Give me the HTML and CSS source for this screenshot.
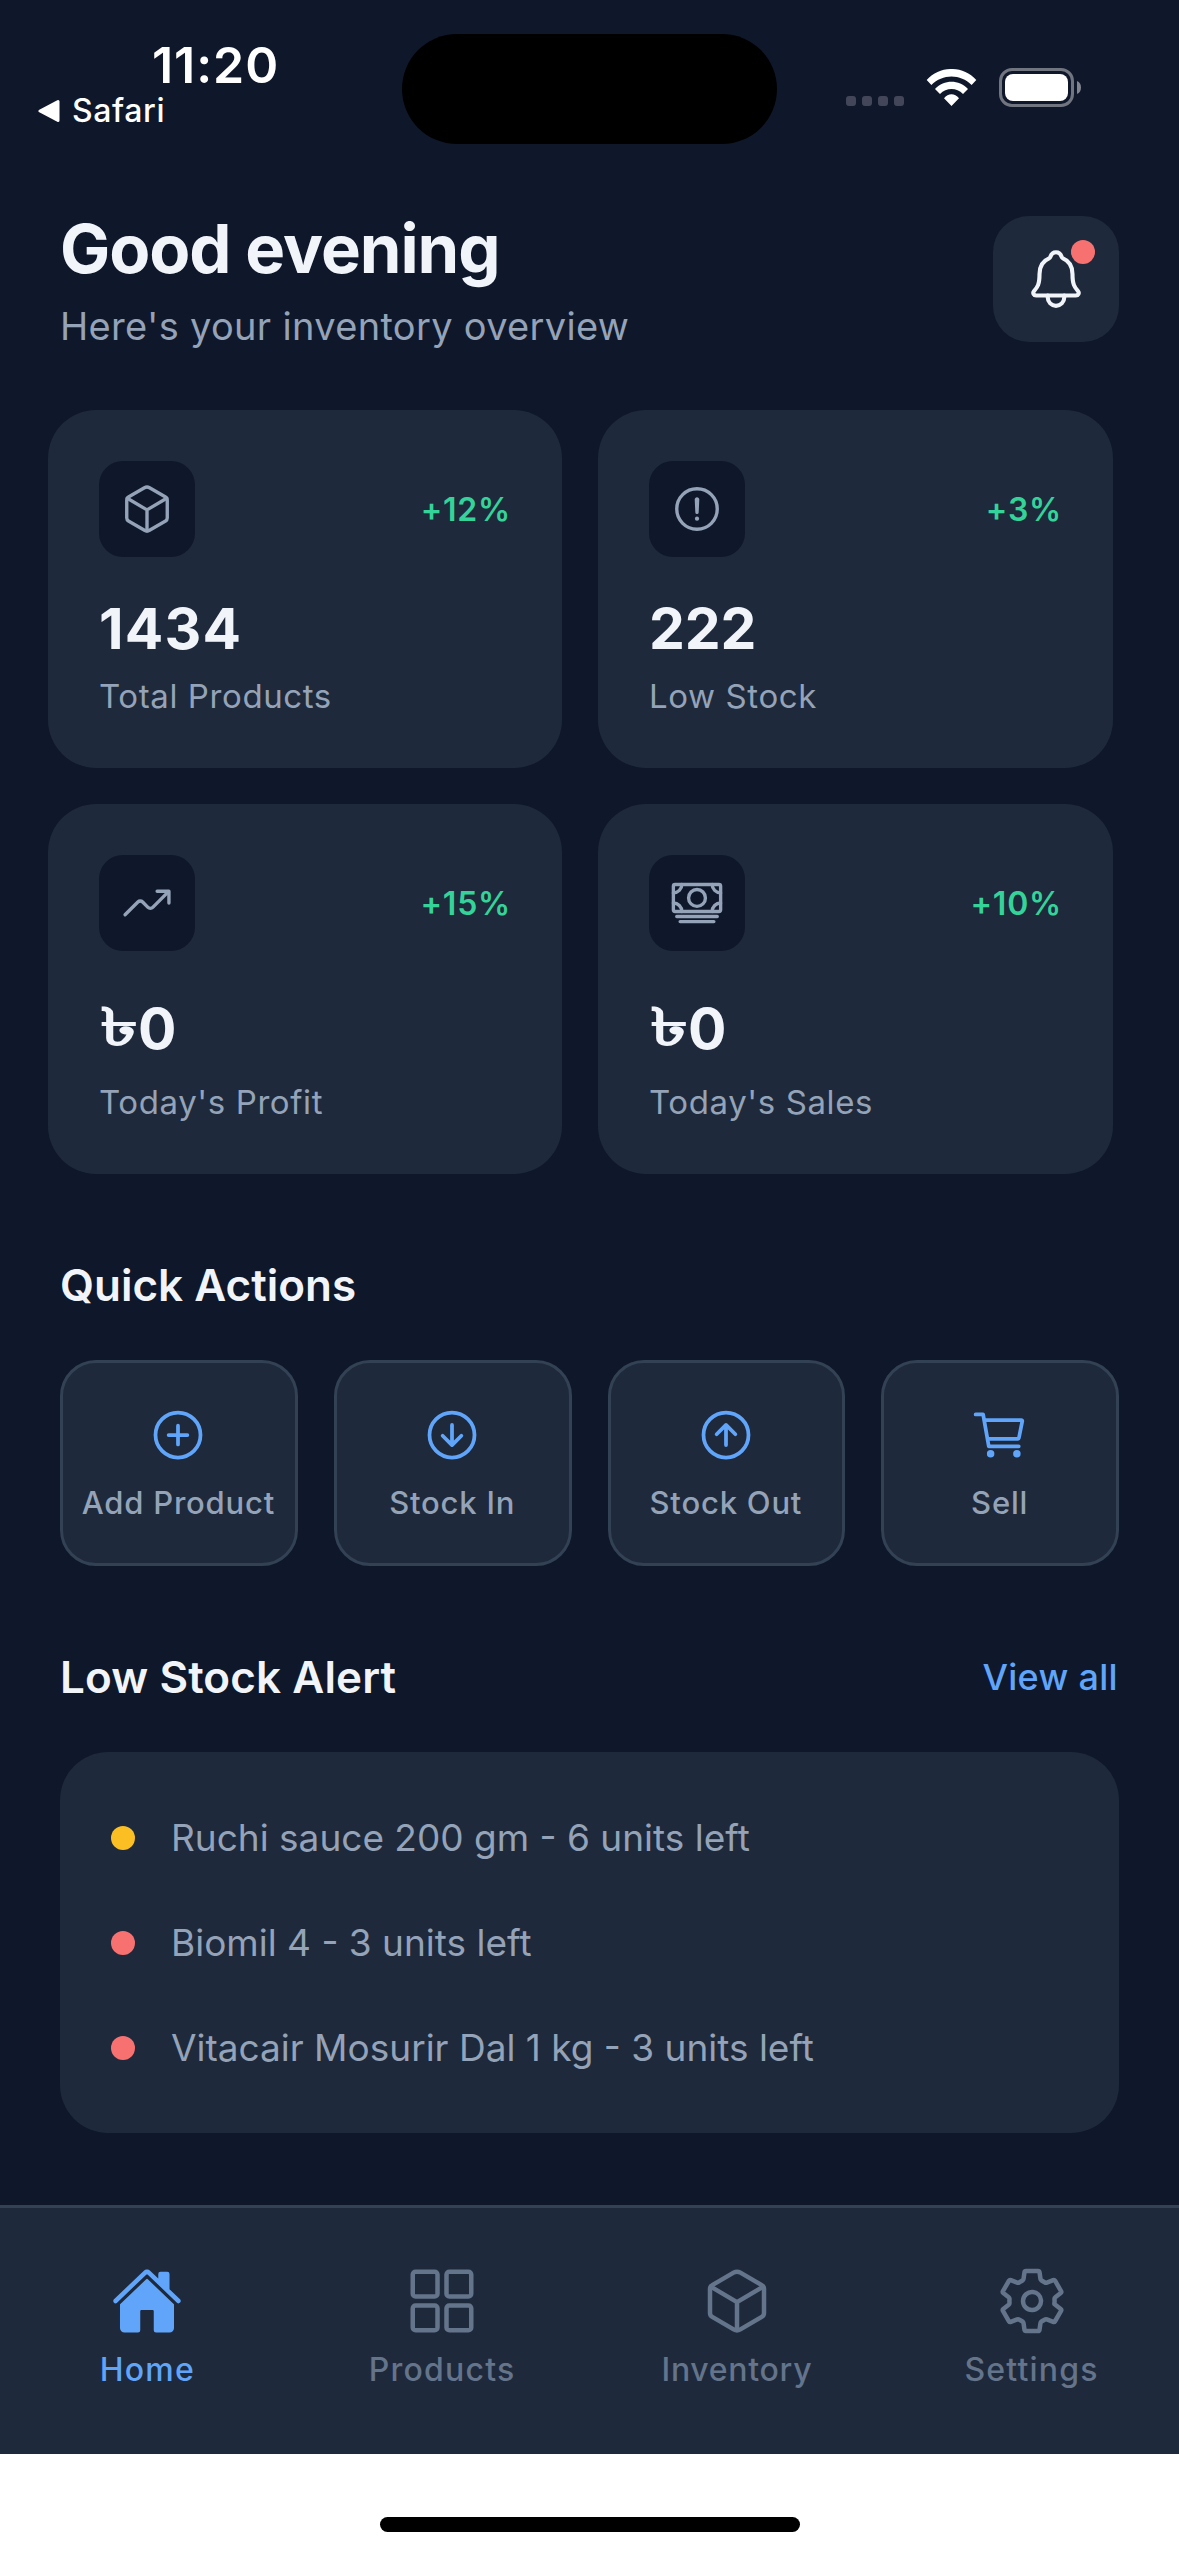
FILE: index.html
```html
<!DOCTYPE html>
<html lang="en">
<head>
<meta charset="utf-8">
<meta name="viewport" content="width=device-width, initial-scale=1">
<title>Inventory overview</title>
<link rel="stylesheet" href="styles.css">
</head>
<body>
<div class="screen">

  <div class="status-bar">
    <div class="status-left">
      <div class="clock">11:20</div>
      <div class="back-app">
        <svg class="back-arrow" viewBox="0 0 22 24"><path d="M20 2.5V21.500L2 12Z"/></svg>
        <span>Safari</span>
      </div>
    </div>
    <div class="island"></div>
    <div class="status-right">
      <svg class="signal" viewBox="0 0 58 11"><rect width="10" height="10" rx="3"/><rect x="16" width="10" height="10" rx="3"/><rect x="32" width="10" height="10" rx="3"/><rect x="48" width="10" height="10" rx="3"/></svg>
      <svg class="wifi" viewBox="0 0 51 38"><path d="M.7 11C14-3.700 37-3.700 50.300 11L45.600 16C34.500 4.600 16.500 4.600 5.400 16ZM9 20C18.200 10.300 32.800 10.300 42 20L37 25C30.600 18.400 20.400 18.400 14 25ZM18 29.300C22.200 24 28.800 24 33 29.300L25.500 37Z"/></svg>
      <svg class="battery" viewBox="0 0 83 39"><rect class="battery-shell" x="1.500" y="1.500" width="72" height="36" rx="11.500"/><rect class="battery-level" x="6" y="6" width="63" height="27" rx="8"/><path class="battery-cap" d="M78 13C80.700 14 82 16.500 82 19.500S80.700 25 78 26Z"/></svg>
    </div>
  </div>

  <header class="header">
    <div>
      <h1 class="title">Good evening</h1>
      <p class="subtitle">Here's your inventory overview</p>
    </div>
    <button class="bell" aria-label="Notifications">
      <svg class="icon bell-icon" viewBox="0 0 512 512"><path d="M427.68 351.43C402 320 383.87 304 383.87 217.35 383.87 138 343.35 109.73 310 96c-4.43-1.82-8.600-6-9.950-10.550C294.200 65.540 277.800 48 256 48s-38.210 17.550-44 37.470c-1.350 4.600-5.520 8.710-9.950 10.530-33.390 13.750-73.870 41.920-73.870 121.350C128.130 304 110 320 84.320 351.430 73.680 364.450 83 384 101.610 384h308.880c18.510 0 27.770-19.610 17.190-32.570z"/><path d="M320 384v16a64 64 0 01-128 0v-16"/></svg>
      <span class="bell-badge"></span>
    </button>
  </header>

  <section class="stats">
    <article class="card">
      <div class="card-top">
        <span class="tile"><svg class="icon" viewBox="0 0 512 512"><path d="M448 341.370V170.610A32 32 0 00432.110 143l-152-88.460a47.940 47.940 0 00-48.240 0L79.890 143A32 32 0 0064 170.610v170.760A32 32 0 0079.890 369l152 88.460a48 48 0 0048.240 0l152-88.460A32 32 0 00448 341.370z"/><path d="M69 153.990l187 110 187-110M256 463.990v-200"/></svg></span>
        <span class="delta">+12%</span>
      </div>
      <div class="value value-wide">1434</div>
      <div class="label">Total Products</div>
    </article>
    <article class="card">
      <div class="card-top">
        <span class="tile"><svg class="icon" viewBox="0 0 512 512"><circle cx="256" cy="256" r="192"/><path d="M250.260 166.050L256 288l5.730-121.950a5.740 5.740 0 00-5.790-6h0a5.740 5.740 0 00-5.680 6z"/><circle class="solid" cx="256" cy="347.910" r="20"/></svg></span>
        <span class="delta">+3%</span>
      </div>
      <div class="value">222</div>
      <div class="label">Low Stock</div>
    </article>
    <article class="card card-money">
      <div class="card-top">
        <span class="tile"><svg class="icon" viewBox="0 0 512 512"><path d="M352 144h112v112"/><path d="M48 368l121.370-121.370a32 32 0 0145.260 0l50.740 50.740a32 32 0 0045.260 0L448 160"/></svg></span>
        <span class="delta">+15%</span>
      </div>
      <div class="value"><span class="taka">৳</span>0</div>
      <div class="label">Today's Profit</div>
    </article>
    <article class="card card-money">
      <div class="card-top">
        <span class="tile"><svg class="icon" viewBox="0 0 512 512"><rect x="32" y="80" width="448" height="256" rx="16"/><path d="M64 384h384M96 432h320"/><circle cx="256" cy="208" r="80"/><path d="M480 160a80 80 0 01-80-80M32 160a80 80 0 0080-80M480 256a80 80 0 00-80 80M32 256a80 80 0 0180 80"/></svg></span>
        <span class="delta">+10%</span>
      </div>
      <div class="value"><span class="taka">৳</span>0</div>
      <div class="label">Today's Sales</div>
    </article>
  </section>

  <section class="section">
    <div class="section-head"><h2 class="section-title">Quick Actions</h2></div>
    <div class="actions">
      <button class="action">
        <svg class="icon" viewBox="0 0 512 512"><circle cx="256" cy="256" r="192"/><path d="M256 176v160M336 256H176"/></svg>
        <span>Add Product</span>
      </button>
      <button class="action">
        <svg class="icon" viewBox="0 0 512 512"><circle cx="256" cy="256" r="192"/><path d="M176 262.620L256 342l80-79.380M256 330.970V170"/></svg>
        <span>Stock In</span>
      </button>
      <button class="action">
        <svg class="icon" viewBox="0 0 512 512"><circle cx="256" cy="256" r="192"/><path d="M176 249.380L256 170l80 79.380M256 181.030V342"/></svg>
        <span>Stock Out</span>
      </button>
      <button class="action">
        <svg class="icon" viewBox="0 0 512 512"><circle class="dot-fill" cx="176" cy="416" r="16"/><circle class="dot-fill" cx="400" cy="416" r="16"/><path d="M48 80h64l48 272h256"/><path d="M160 288h249.440a8 8 0 007.850-6.430l28.800-144a8 8 0 00-7.850-9.570H128"/></svg>
        <span>Sell</span>
      </button>
    </div>
  </section>

  <section class="section">
    <div class="section-head">
      <h2 class="section-title title-wide">Low Stock Alert</h2>
      <a class="view-all">View all</a>
    </div>
    <ul class="alerts">
      <li class="alert"><span class="dot dot-warn"></span>Ruchi sauce 200 gm - 6 units left</li>
      <li class="alert"><span class="dot"></span>Biomil 4 - 3 units left</li>
      <li class="alert"><span class="dot"></span>Vitacair Mosurir Dal 1 kg - 3 units left</li>
    </ul>
  </section>

  <nav class="tabs">
    <a class="tab tab-active">
      <svg class="icon icon-filled" viewBox="0 0 512 512"><path d="M261.560 101.280a8 8 0 00-11.060 0L66.400 277.150a8 8 0 00-2.470 5.790L63.900 448a32 32 0 0032 32H192a16 16 0 0016-16V328a8 8 0 018-8h80a8 8 0 018 8v136a16 16 0 0016 16h96.060a32 32 0 0032-32V282.940a8 8 0 00-2.470-5.790z"/><path d="M490.910 244.150l-74.800-71.560V64a16 16 0 00-16-16h-48a16 16 0 00-16 16v32l-57.920-55.380C272.770 35.140 264.710 32 256 32c-8.680 0-16.720 3.140-22.140 8.630l-212.700 203.500c-6.220 6-7 15.870-1.340 22.370A16 16 0 0043 267.560L250.500 69.280a8 8 0 0111.060 0l207.520 198.280a16 16 0 0022.590-.44c6.140-6.360 5.630-16.860-.760-22.970z"/></svg>
      <span>Home</span>
    </a>
    <a class="tab">
      <svg class="icon" viewBox="0 0 512 512"><rect x="48" y="48" width="176" height="176" rx="20"/><rect x="288" y="48" width="176" height="176" rx="20"/><rect x="48" y="288" width="176" height="176" rx="20"/><rect x="288" y="288" width="176" height="176" rx="20"/></svg>
      <span>Products</span>
    </a>
    <a class="tab tab-tight">
      <svg class="icon" viewBox="0 0 512 512"><path d="M448 341.370V170.610A32 32 0 00432.110 143l-152-88.460a47.940 47.940 0 00-48.240 0L79.890 143A32 32 0 0064 170.610v170.760A32 32 0 0079.890 369l152 88.460a48 48 0 0048.240 0l152-88.460A32 32 0 00448 341.370z"/><path d="M69 153.990l187 110 187-110M256 463.990v-200"/></svg>
      <span>Inventory</span>
    </a>
    <a class="tab">
      <svg class="icon" viewBox="0 0 512 512"><path d="M262.290 192.310a64 64 0 1057.400 57.400 64.130 64.130 0 00-57.400-57.400zM416.390 256a154.340 154.340 0 01-1.530 20.790l45.210 35.460a10.810 10.810 0 012.450 13.750l-42.770 74a10.810 10.810 0 01-13.140 4.590l-44.900-18.080a16.110 16.110 0 00-15.170 1.750A164.480 164.480 0 01325 400.800a15.940 15.940 0 00-8.820 12.140l-6.730 47.890a11.080 11.080 0 01-10.680 9.170h-85.540a11.110 11.110 0 01-10.690-8.870l-6.720-47.820a16.070 16.070 0 00-9-12.220 155.300 155.300 0 01-21.460-12.570 16 16 0 00-15.110-1.710l-44.890 18.070a10.810 10.810 0 01-13.140-4.580l-42.770-74a10.800 10.800 0 012.450-13.750l38.210-30a16.050 16.050 0 006-14.080c-.36-4.170-.58-8.330-.58-12.500s.21-8.270.58-12.350a16 16 0 00-6.070-13.940l-38.190-30A10.810 10.810 0 0149.480 186l42.770-74a10.810 10.810 0 0113.140-4.590l44.900 18.080a16.110 16.110 0 0015.170-1.750A164.480 164.480 0 01187 111.200a15.940 15.940 0 008.820-12.140l6.730-47.890A11.080 11.080 0 01213.230 42h85.540a11.110 11.110 0 0110.690 8.870l6.720 47.820a16.070 16.070 0 009 12.220 155.300 155.300 0 0121.460 12.570 16 16 0 0015.110 1.710l44.890-18.070a10.810 10.810 0 0113.140 4.580l42.770 74a10.800 10.800 0 01-2.450 13.750l-38.210 30a16.050 16.050 0 00-6.050 14.080c.33 4.140.55 8.300.55 12.470z"/></svg>
      <span>Settings</span>
    </a>
  </nav>

  <div class="home-area"><div class="home-indicator"></div></div>
</div>
</body>
</html>
```
FILE: styles.css
```css
:root {
  --bg: #0f172a;
  --surface: #1e293b;
  --border: #334155;
  --text: #f1f5f9;
  --text-soft: #94a3b8;
  --text-muted: #64748b;
  --accent: #60a5fa;
  --success: #34d399;
  --danger: #f87171;
  --warning: #fbbf24;
}

* { box-sizing: border-box; }

body {
  margin: 0;
  background: #fff;
  font-family: Inter, "Liberation Sans", sans-serif;
}

h1, h2, p, ul { margin: 0; padding: 0; }
ul { list-style: none; }
button { margin: 0; padding: 0; border: 0; font: inherit; }
svg { display: block; flex: none; }

.screen {
  display: flex;
  flex-direction: column;
  width: 1179px;
  height: 2556px;
  background: var(--bg);
}

.icon {
  width: 54px;
  height: 54px;
  fill: none;
  stroke: currentColor;
  stroke-width: 32;
  stroke-linecap: round;
  stroke-linejoin: round;
}
.icon-filled { fill: currentColor; stroke: none; }
.solid { fill: currentColor; stroke: none; }
.dot-fill { fill: currentColor; }

/* Status bar */
.status-bar {
  display: grid;
  grid-template-columns: 402px 375px 402px;
  height: 206px;
  color: #fff;
}
.status-left { padding-top: 38px; }
.clock {
  padding-left: 152px;
  font-size: 50px;
  font-weight: 600;
  line-height: 54px;
  letter-spacing: 0.96px;
}
.back-app {
  display: flex;
  align-items: center;
  gap: 12px;
  padding-left: 38px;
  font-size: 32px;
  font-weight: 500;
  line-height: 37px;
  letter-spacing: 0.6px;
}
.back-arrow {
  width: 22px;
  height: 24px;
  fill: #fff;
  stroke: #fff;
  stroke-width: 3;
  stroke-linejoin: round;
}
.island {
  height: 110px;
  margin-top: 34px;
  border-radius: 55px;
  background: #000;
}
.status-right {
  display: flex;
  align-items: flex-end;
  gap: 22px;
  height: 107px;
  padding-left: 69px;
}
.signal { width: 58px; height: 11px; fill: #424658; }
.wifi { width: 51px; height: 38px; fill: #fff; }
.battery { width: 83px; height: 39px; }
.battery-shell { fill: none; stroke: #71757f; stroke-width: 3; }
.battery-level { fill: #fff; }
.battery-cap { fill: #81858e; }

/* Header */
.header {
  display: flex;
  justify-content: space-between;
  align-items: center;
  height: 146px;
  padding: 0 60px;
}
.title {
  color: var(--text);
  font-size: 67px;
  font-weight: 700;
  line-height: 86px;
  letter-spacing: -1.05px;
}
.subtitle {
  margin-top: 8px;
  color: var(--text-soft);
  font-size: 38px;
  line-height: 52px;
  letter-spacing: 0.32px;
}
.bell {
  position: relative;
  display: flex;
  align-items: center;
  justify-content: center;
  width: 126px;
  height: 126px;
  border-radius: 36px;
  background: var(--surface);
  color: var(--text);
}
.bell-icon { width: 66px; height: 66px; }
.bell-badge {
  position: absolute;
  top: 24px;
  right: 24px;
  width: 24px;
  height: 24px;
  border-radius: 50%;
  background: var(--danger);
}

/* Stat cards */
.stats {
  display: grid;
  grid-template-columns: 514px 515px;
  gap: 36px;
  margin: 58px 66px 0 48px;
}
.card {
  padding: 51px;
  border-radius: 48px;
  background: var(--surface);
}
.card-top {
  display: flex;
  align-items: center;
  justify-content: space-between;
}
.tile {
  display: flex;
  align-items: center;
  justify-content: center;
  width: 96px;
  height: 96px;
  border-radius: 24px;
  background: var(--bg);
  color: var(--text-soft);
}
.delta {
  color: var(--success);
  font-size: 32px;
  font-weight: 600;
  letter-spacing: 0.8px;
}
.value {
  margin-top: 36px;
  color: var(--text);
  font-size: 57px;
  font-weight: 700;
  line-height: 72px;
  letter-spacing: -0.2px;
}
.value-wide { letter-spacing: 1.2px; }
.card-money .value { line-height: 84px; }
.taka {
  display: inline-block;
  width: 39px;
  transform: translate(1px, -2px) scale(1.36, 0.92);
  transform-origin: left center;
}
.label {
  margin-top: 10px;
  color: var(--text-soft);
  font-size: 33px;
  line-height: 42px;
  letter-spacing: 0.6px;
}

/* Sections */
.section { margin: 84px 60px 0; }
.section-head {
  display: flex;
  align-items: center;
  justify-content: space-between;
  margin-bottom: 48px;
}
.section-title {
  color: var(--text);
  font-size: 44px;
  font-weight: 600;
  line-height: 54px;
}
.title-wide { letter-spacing: 0.1px; }
.view-all {
  margin-right: 1px;
  color: var(--accent);
  font-size: 36px;
  font-weight: 500;
  line-height: 54px;
  letter-spacing: 0.3px;
}

.actions {
  display: grid;
  grid-template-columns: repeat(4, 1fr);
  gap: 36px;
}
.action {
  display: flex;
  flex-direction: column;
  align-items: center;
  gap: 18px;
  height: 206px;
  padding: 42px 1px 0 0;
  border: 3px solid var(--border);
  border-radius: 36px;
  background: var(--surface);
  color: var(--text-soft);
  font-size: 31px;
  font-weight: 500;
  line-height: 40px;
  letter-spacing: 0.8px;
  white-space: nowrap;
}
.action .icon { width: 60px; height: 60px; color: var(--accent); }

.alerts {
  padding: 33px 51px;
  border-radius: 48px;
  background: var(--surface);
}
.alert {
  display: flex;
  align-items: center;
  gap: 36px;
  height: 105px;
  color: var(--text-soft);
  font-size: 37px;
}
.dot {
  width: 24px;
  height: 24px;
  border-radius: 50%;
  background: var(--danger);
}
.dot-warn { background: var(--warning); }

/* Tab bar */
.tabs {
  display: grid;
  grid-template-columns: repeat(4, 1fr);
  height: 249px;
  margin-top: 72px;
  padding-top: 57px;
  border-top: 3px solid var(--border);
  background: var(--surface);
}
.tab {
  display: flex;
  flex-direction: column;
  align-items: center;
  gap: 12px;
  color: var(--text-muted);
  font-size: 32px;
  font-weight: 500;
  line-height: 42px;
  letter-spacing: 1.2px;
}
.tab-active { color: var(--accent); }
.tab-tight { letter-spacing: 0.7px; }
.tab .icon { width: 72px; height: 72px; }

.home-area {
  display: flex;
  flex: 1;
  justify-content: center;
  padding-top: 63px;
  background: #fff;
}
.home-indicator {
  width: 420px;
  height: 15px;
  border-radius: 8px;
  background: #000;
}
```
